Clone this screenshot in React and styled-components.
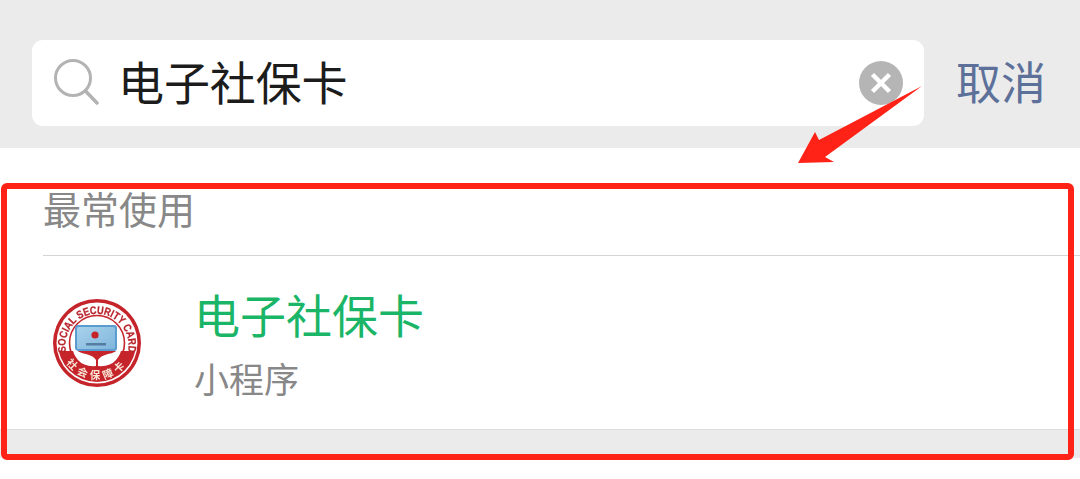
import React from "react";
import styled, { createGlobalStyle } from "styled-components";

const cjk = `"Noto Sans CJK SC", "Liberation Sans", sans-serif`;

const GlobalStyle = createGlobalStyle`
  html, body {
    margin: 0;
    padding: 0;
    background: #fff;
    overflow: hidden;
  }
`;

const Page = styled.div`
  position: relative;
  width: 1080px;
  height: 479px;
  background: #fff;
  font-family: ${cjk};
  overflow: hidden;
`;

const Header = styled.header`
  display: flex;
  align-items: center;
  height: 148px;
  box-sizing: border-box;
  padding: 40px 34px 22px 32px;
  background: #ebebeb;
`;

const SearchBox = styled.div`
  display: flex;
  align-items: center;
  width: 892px;
  height: 86px;
  box-sizing: border-box;
  padding: 0 21px;
  background: #fff;
  border-radius: 11px;
`;

const SearchText = styled.span`
  flex: 1;
  margin: -6px 0 0 19px;
  font-size: 46px;
  line-height: 86px;
  letter-spacing: -0.1px;
  color: #1c1c1c;
`;

const Cancel = styled.span`
  margin: -4px 0 0 auto;
  font-size: 45px;
  line-height: 86px;
  color: #5c7099;
`;

const Section = styled.section`
  display: flex;
  flex-direction: column;
  height: 282px;
  box-sizing: border-box;
  border-bottom: 1px solid #dedede;
`;

const SectionTitle = styled.div`
  height: 108px;
  box-sizing: border-box;
  margin-left: 43px;
  padding-top: 34px;
  font-size: 38px;
  line-height: 52px;
  color: #888;
  border-bottom: 1px solid #d4d4d4;
`;

const Result = styled.div`
  display: flex;
  align-items: flex-start;
  flex: 1;
  padding-left: 52px;
`;

const Logo = styled.svg`
  flex: none;
  width: 90px;
  height: 90px;
  margin-top: 43px;
  filter: blur(0.45px);
`;

const ResultInfo = styled.div`
  display: flex;
  flex-direction: column;
  margin-left: 52px;
`;

const ResultName = styled.div`
  margin-top: 25px;
  font-size: 46px;
  line-height: 64px;
  color: #1ab567;
`;

const ResultType = styled.div`
  margin-top: 8px;
  font-size: 35px;
  line-height: 50px;
  color: #888;
`;

const Footer = styled.div`
  height: 28px;
  background: #ebebeb;
`;

const Highlight = styled.div`
  position: absolute;
  left: 1px;
  top: 183px;
  width: 1073px;
  height: 277px;
  box-sizing: border-box;
  border: 6px solid #ff2216;
  border-radius: 6px;
`;

const Arrow = styled.svg`
  position: absolute;
  left: 790px;
  top: 80px;
`;

const SearchIcon = () => (
  <svg width="46" height="48" viewBox="0 0 46 48" fill="none" stroke="#b3b3b3">
    <circle cx="20" cy="19" r="17.5" strokeWidth="3" />
    <line x1="32.5" y1="32" x2="44" y2="44" strokeWidth="3.5" strokeLinecap="round" />
  </svg>
);

const ClearIcon = () => (
  <svg width="44" height="44" viewBox="0 0 44 44">
    <circle cx="22" cy="22" r="22" fill="#b5b5b5" />
    <path d="M13.5 13.5 L30.5 30.5 M30.5 13.5 L13.5 30.5" stroke="#fff" strokeWidth="4.5" />
  </svg>
);

const SocialLogo = () => (
  <Logo viewBox="0 0 90 90">
    <defs>
      <path id="topArc" d="M15 56 A31.5 31.5 0 1 1 75 56" />
      <path id="bottomArc" d="M9 50 A36.5 36.5 0 0 0 81 50" />
      <clipPath id="lowerPart">
        <rect x="0" y="52" width="90" height="38" />
      </clipPath>
      <linearGradient id="cardFill" x1="0" y1="0" x2="1" y2="1">
        <stop offset="0" stopColor="#a9d2ec" />
        <stop offset="1" stopColor="#7fb6dc" />
      </linearGradient>
    </defs>
    <circle cx="45" cy="44" r="44" fill="#c5242b" />
    <circle cx="45" cy="44" r="40.5" fill="#fff" />
    <circle cx="45" cy="44" r="39" fill="#c5242b" clipPath="url(#lowerPart)" />
    <circle cx="45" cy="44" r="27.5" fill="#fff" stroke="#c5242b" strokeWidth="1.6" />
    <path d="M17.5 52 A28 28 0 0 0 72.5 52 Z" fill="#c5242b" />
    <text fontFamily="Liberation Sans, sans-serif" fontSize="11" fontWeight="700" fill="#b8242c" stroke="#b8242c" strokeWidth="0.25">
      <textPath href="#topArc" startOffset="50%" textAnchor="middle" textLength="112" lengthAdjust="spacingAndGlyphs">
        SOCIAL SECURITY CARD
      </textPath>
    </text>
    <rect x="23" y="26" width="42" height="26" rx="3" fill="#5a9ccf" />
    <rect x="25" y="28" width="38" height="22" rx="1.5" fill="url(#cardFill)" />
    <circle cx="43" cy="36" r="3.6" fill="#c5242b" />
    <rect x="34" y="44" width="20" height="2.5" fill="#3d5f86" opacity="0.7" />
    <path
      d="M20 48 Q27 54 34 55 Q42 57 44 61 L44 67 Q32 68 26 61 Q21 55 20 48 Z M70 48 Q63 54 56 55 Q48 57 46 61 L46 67 Q58 68 64 61 Q69 55 70 48 Z"
      fill="#fff"
    />
    <text fontFamily={cjk} fontSize="10.5" fontWeight="700" fill="#f9e6d6" letterSpacing="4">
      <textPath href="#bottomArc" startOffset="50%" textAnchor="middle">
        社会保障卡
      </textPath>
    </text>
  </Logo>
);

const App = () => (
  <>
    <GlobalStyle />
    <Page>
      <Header>
        <SearchBox>
          <SearchIcon />
          <SearchText>电子社保卡</SearchText>
          <ClearIcon />
        </SearchBox>
        <Cancel>取消</Cancel>
      </Header>
      <Section>
        <SectionTitle>最常使用</SectionTitle>
        <Result>
          <SocialLogo />
          <ResultInfo>
            <ResultName>电子社保卡</ResultName>
            <ResultType>小程序</ResultType>
          </ResultInfo>
        </Result>
      </Section>
      <Footer />
      <Highlight />
      <Arrow width="140" height="90" viewBox="0 0 140 90">
        <path d="M8 83 L25 52 L29 60 L132 6 L35 77 L44 82 Z" fill="#ff2216" />
      </Arrow>
    </Page>
  </>
);

export default App;
